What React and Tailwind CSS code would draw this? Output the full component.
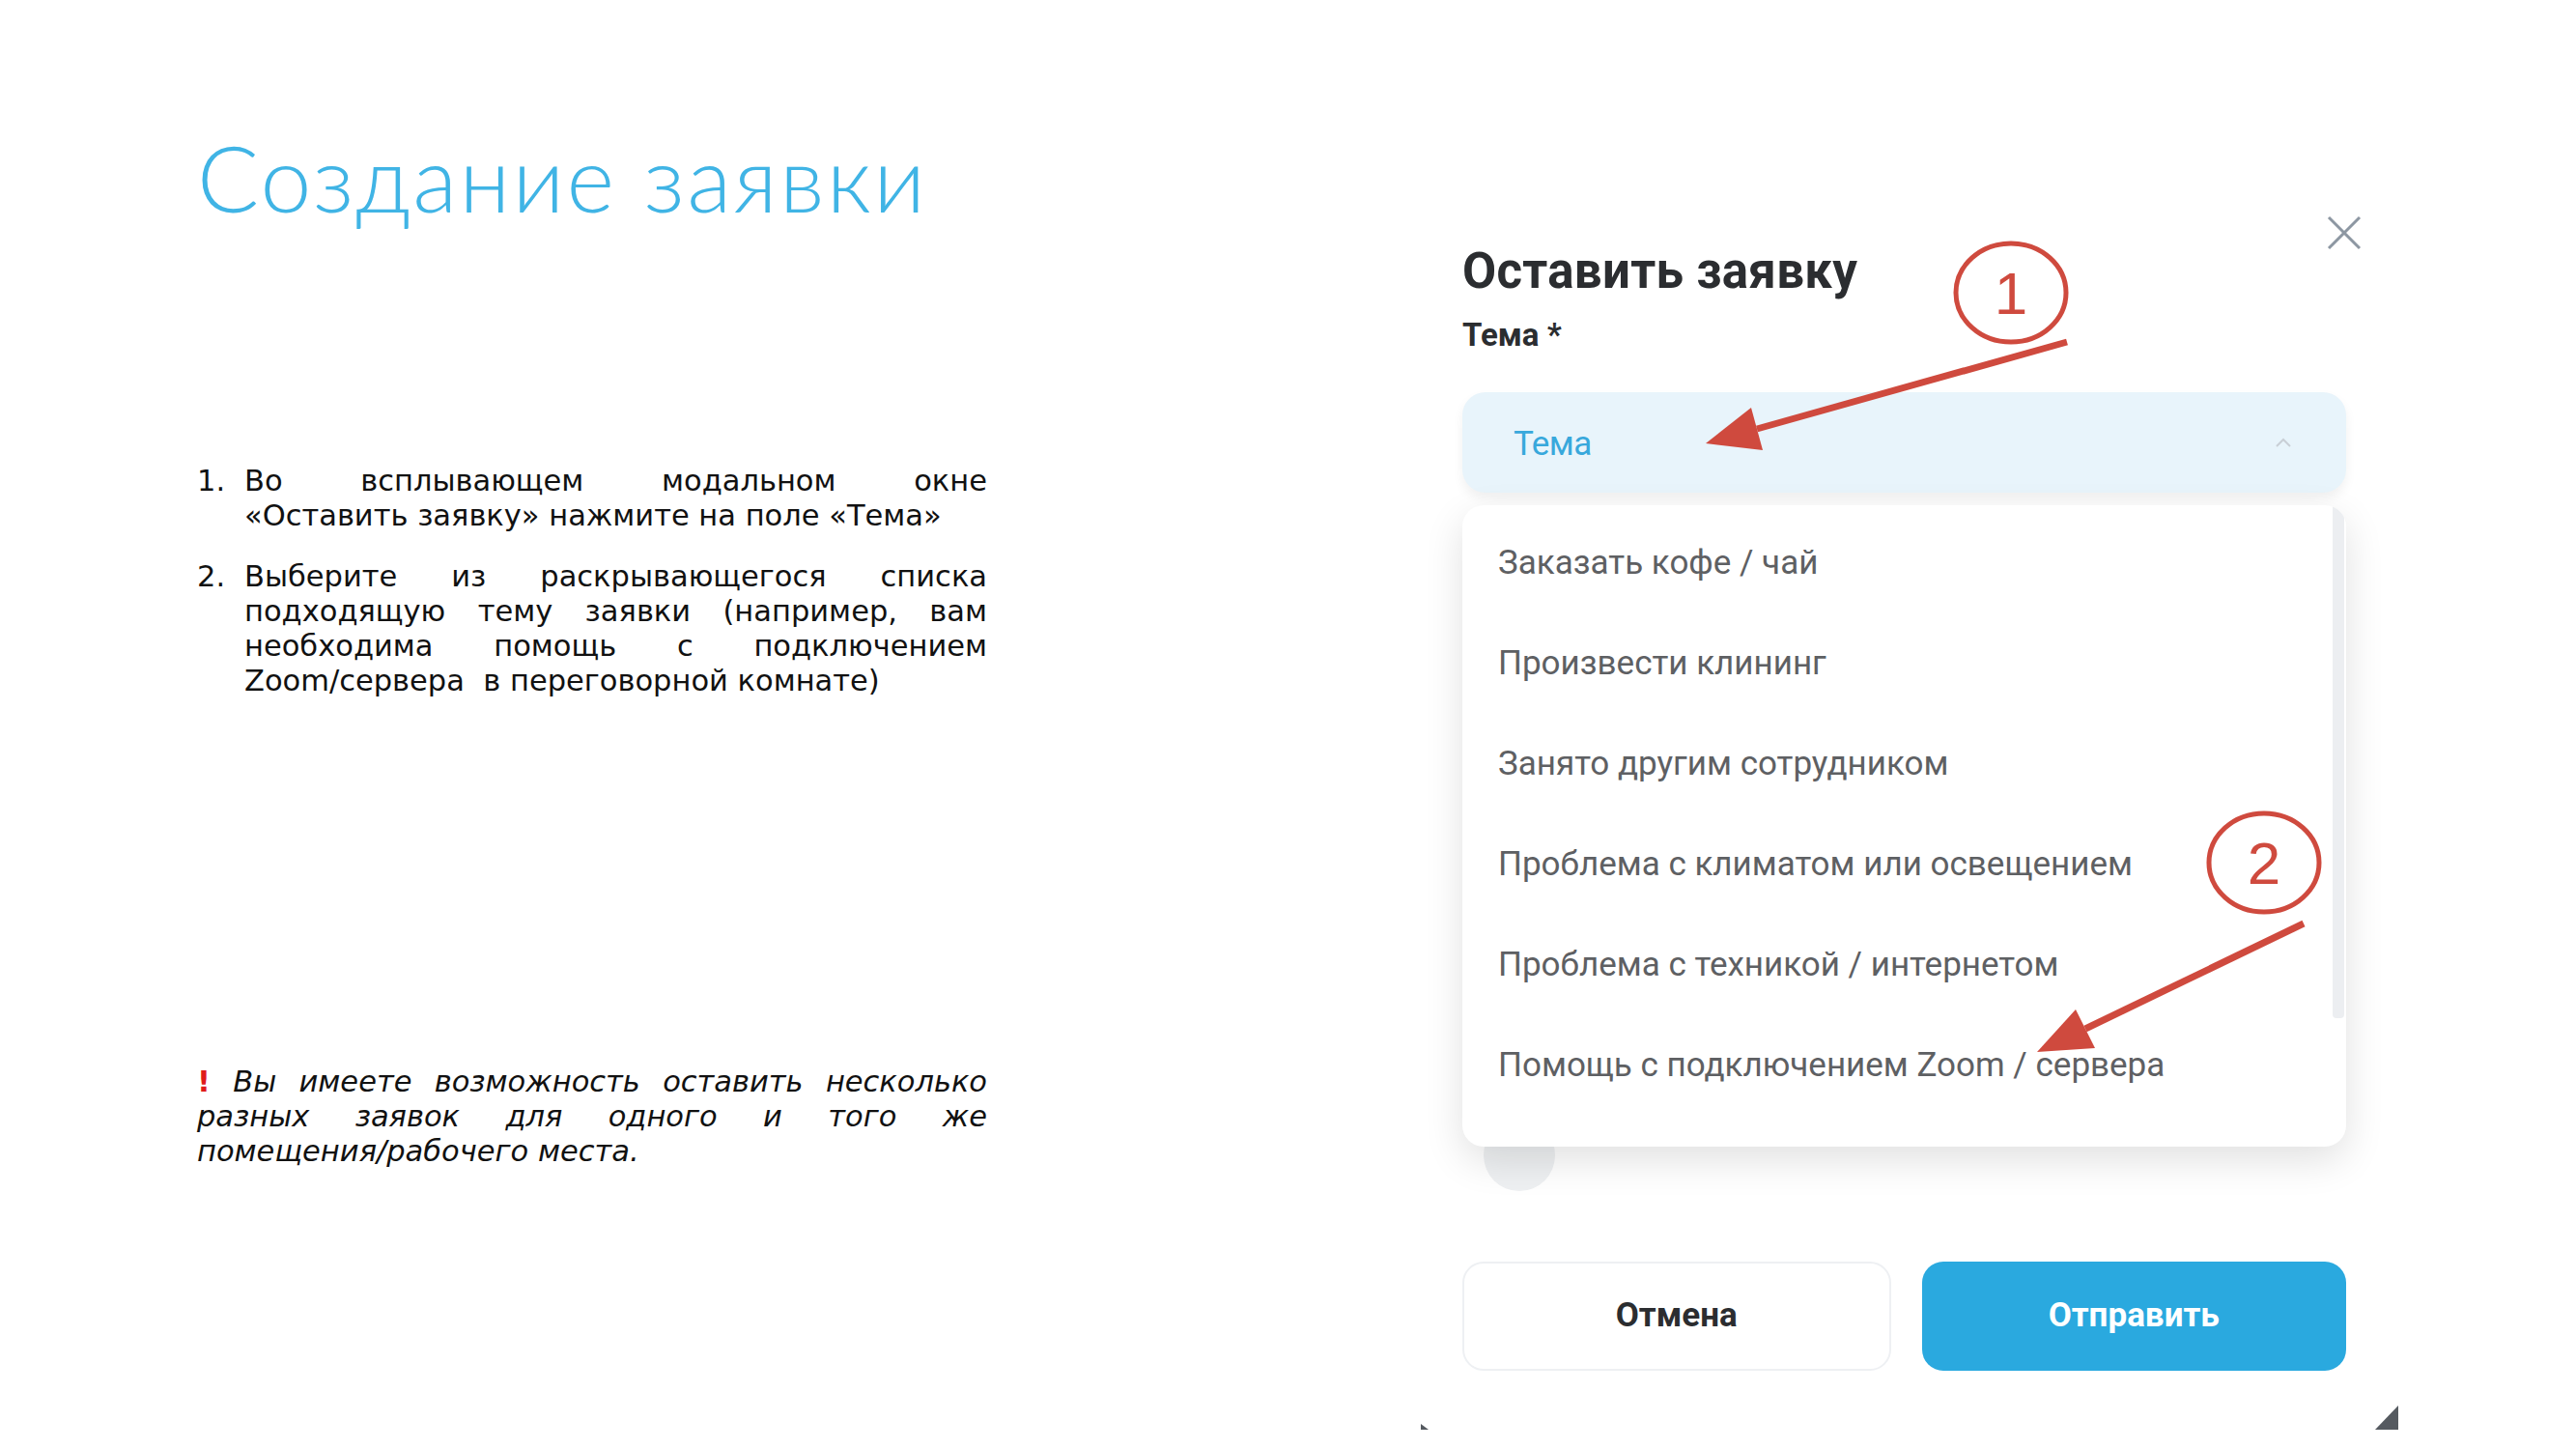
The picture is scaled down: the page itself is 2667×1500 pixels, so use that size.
import React from 'react';

const justify = 'text-justify [text-align-last:justify]';

const topics = [
  'Заказать кофе / чай',
  'Произвести клининг',
  'Занято другим сотрудником',
  'Проблема с климатом или освещением',
  'Проблема с техникой / интернетом',
  'Помощь с подключением Zoom / сервера',
];

function Annotations() {
  return (
    <svg className="absolute inset-0 pointer-events-none" width="1012" height="1284" viewBox="0 0 1012 1284">
      <ellipse cx="611" cy="107" rx="57" ry="51" fill="none" stroke="#cf4a3e" strokeWidth="5" />
      <text x="611" y="129" textAnchor="middle" fontSize="62" fontFamily="'Liberation Sans', sans-serif" fontWeight="300" fill="#cf4a3e">1</text>
      <line x1="669" y1="158" x2="348" y2="248" stroke="#cf4a3e" strokeWidth="7" />
      <polygon points="295,263 354,270 342,226" fill="#cf4a3e" />

      <ellipse cx="873" cy="697" rx="57" ry="51" fill="none" stroke="#cf4a3e" strokeWidth="5" />
      <text x="873" y="719" textAnchor="middle" fontSize="62" fontFamily="'Liberation Sans', sans-serif" fontWeight="300" fill="#cf4a3e">2</text>
      <line x1="914" y1="760" x2="688" y2="869" stroke="#cf4a3e" strokeWidth="7" />
      <polygon points="638,893 698,889 678,849" fill="#cf4a3e" />

      <polygon points="1012,1259 1012,1284 988,1284" fill="#555a60" />
      <polygon points="0,1278 0,1284 8,1284" fill="#555a60" />
    </svg>
  );
}

function RequestModal() {
  return (
    <div className="relative w-[1012px] h-[1284px] bg-white mt-[196px] mr-[184px] px-[43px] pr-[54px] pt-[55px] font-['Roboto',sans-serif] overflow-hidden">
      <button className="absolute top-[26px] right-[37px] w-[38px] h-[38px]">
        <svg width="38" height="38" viewBox="0 0 38 38">
          <line x1="3" y1="3" x2="35" y2="35" stroke="#8d97a2" strokeWidth="3" />
          <line x1="35" y1="3" x2="3" y2="35" stroke="#8d97a2" strokeWidth="3" />
        </svg>
      </button>

      <h2 className="text-[51px] leading-[60px] font-bold text-[#2b2d30] tracking-[0.3px]">Оставить заявку</h2>
      <div className="mt-[16px] text-[33px] leading-[40px] font-bold text-[#2b2d30] tracking-[0px]">Тема *</div>

      <div className="mt-[39px] h-[104px] rounded-[24px] bg-[#e8f4fb] shadow-[0_6px_12px_rgba(0,0,0,0.06)] flex items-center pl-[53px] pr-[56px]">
        <span className="flex-1 text-[35px] text-[#38a8dc] tracking-[-0.5px] mt-[4px]">Тема</span>
        <svg width="18" height="12" viewBox="0 0 18 12">
          <polyline points="2,10 9,3 16,10" fill="none" stroke="#c9cfd6" strokeWidth="2" />
        </svg>
      </div>

      <div className="relative mt-[13px]">
        <div className="absolute left-[22px] top-[636px] w-[74px] h-[74px] rounded-full bg-[#eef0f2]" />
        <div className="relative h-[664px] rounded-[22px] bg-white shadow-[0_14px_40px_rgba(0,0,0,0.12)] flex overflow-hidden">
          <div className="flex-1 pt-[8px]">
            {topics.map((t) => (
              <div key={t} className="h-[104px] flex items-center pl-[37px] text-[35px] text-[#5e6063] tracking-[0px]">
                {t}
              </div>
            ))}
          </div>
          <div className="w-[14px] pr-[2px]">
            <div className="h-[531px] bg-[#eceef1] rounded-b-[4px]" />
          </div>
        </div>
      </div>

      <div className="mt-[119px] flex gap-[32px]">
        <button className="flex-1 h-[113px] rounded-[22px] bg-white border-2 border-[#eef0f3] text-[35px] font-bold text-[#2b2d30] tracking-[0px]">
          Отмена
        </button>
        <button className="flex-1 h-[113px] rounded-[22px] bg-[#2aa9df] text-[35px] font-bold text-white tracking-[0px]">
          Отправить
        </button>
      </div>

      <Annotations />
    </div>
  );
}

export default function App() {
  return (
    <div className="w-[2667px] h-[1500px] bg-white flex justify-between overflow-hidden">
      <div className="ml-[204px] w-[818px] font-['DejaVu_Sans',sans-serif] text-[#111]">
        <h1 className="mt-[128px] text-[95px] leading-[110px] font-['Lato',sans-serif] font-light text-[#40b4e5] tracking-[2.3px]">
          Создание заявки
        </h1>

        <ol className="mt-[242px] text-[30.5px] leading-[36px]">
          <li className="flex">
            <span className="w-[49px] shrink-0">1.</span>
            <div className="flex-1">
              <div className={justify}>Во всплывающем модальном окне</div>
              <div>«Оставить заявку» нажмите на поле «Тема»</div>
            </div>
          </li>
          <li className="flex mt-[27px]">
            <span className="w-[49px] shrink-0">2.</span>
            <div className="flex-1">
              <div className={justify}>Выберите из раскрывающегося списка</div>
              <div className={justify}>подходящую тему заявки (например, вам</div>
              <div className={justify}>необходима помощь с подключением</div>
              <div>Zoom/сервера&nbsp; в переговорной комнате)</div>
            </div>
          </li>
        </ol>

        <div className="mt-[379px] text-[30.5px] leading-[36px] italic">
          <div className={justify}>
            <span className="text-[#e01b1b] font-bold not-italic">!</span> Вы имеете возможность оставить несколько
          </div>
          <div className={justify}>разных заявок для одного и того же</div>
          <div>помещения/рабочего места.</div>
        </div>
      </div>

      <RequestModal />
    </div>
  );
}
